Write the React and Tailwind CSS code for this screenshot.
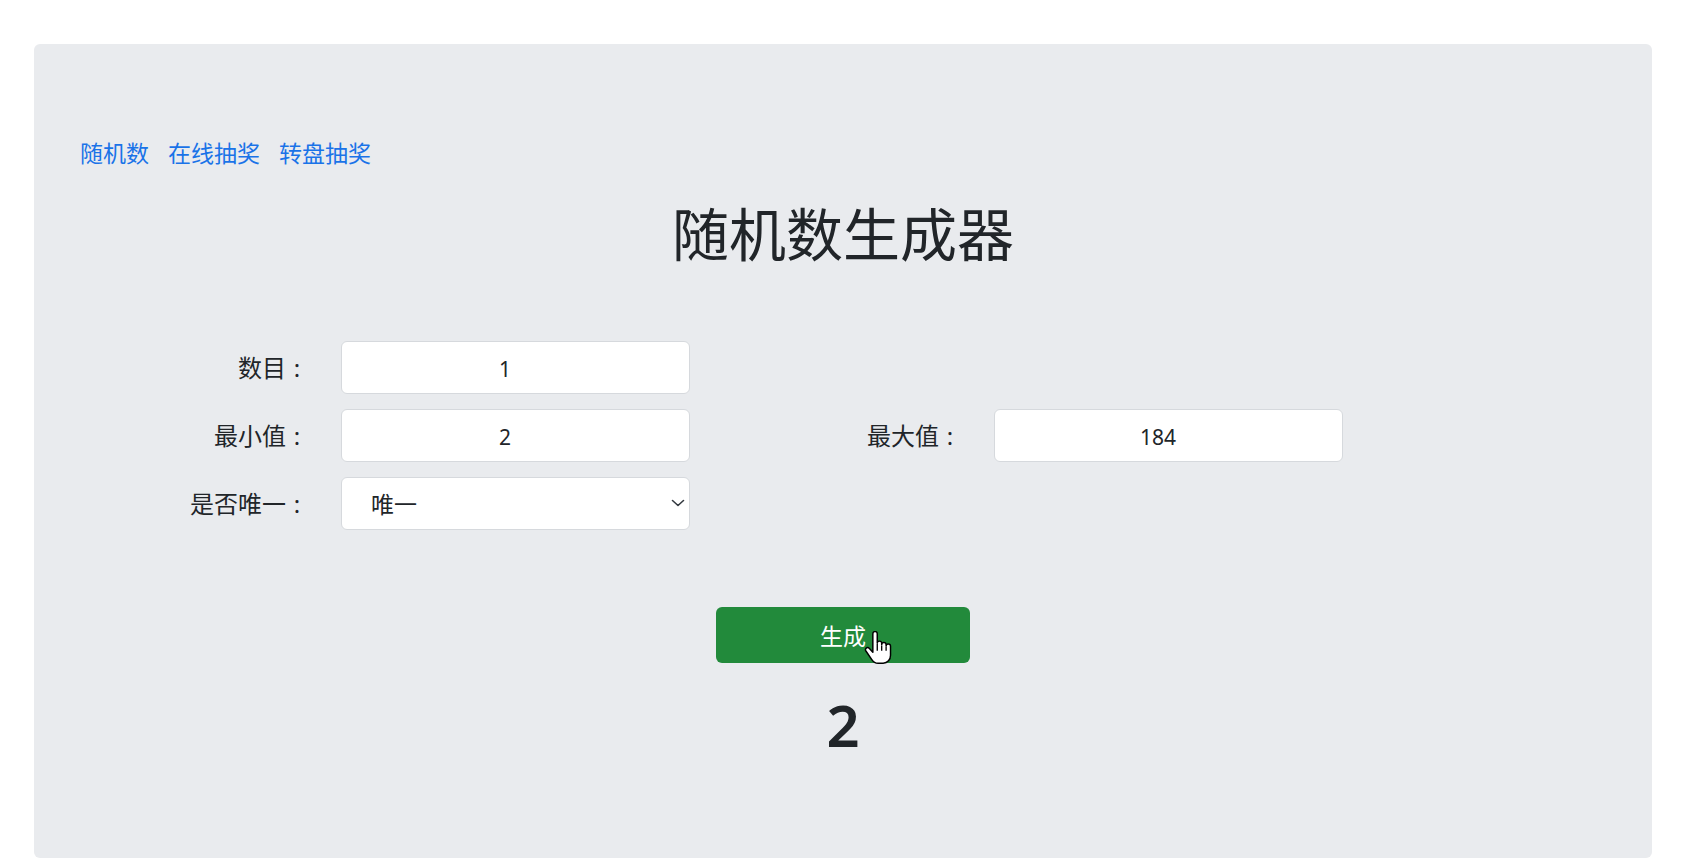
import React from "react";

function Label({ text }) {
  return (
    <div className="flex items-center justify-end text-[24px] text-[#212529]">
      <span>{text}</span>
      <span className="inline-block w-[22px] text-center">:</span>
    </div>
  );
}

function Field({ value }) {
  return (
    <input
      readOnly
      value={value}
      className="h-[53px] w-full rounded-[6px] border border-[#d6d9dd] bg-white pt-[3px] pr-[21px] text-center text-[21px] text-[#212529] outline-none"
    />
  );
}

function HandCursor() {
  return (
    <svg
      className="pointer-events-none absolute left-[148px] top-[24px] h-[35px] w-[28px]"
      viewBox="0 0 19 23"
      fill="none"
    >
      <path
        d="M6 1.5a1.5 1.5 0 0 1 3 0V8a1.5 1.5 0 0 1 3 0v1a1.5 1.5 0 0 1 3 0v1a1.5 1.5 0 0 1 3 0v6c0 3-2 5.5-5 5.5H9.5c-2 0-3.2-1-4.2-2.5L1.3 13.2a1.4 1.4 0 0 1 2.2-1.8L6 14Z"
        fill="white"
        stroke="black"
        strokeWidth="1"
        strokeLinejoin="round"
      />
      <path d="M9 8.5V13M12 9.5V13M15 10.5V13" stroke="black" strokeWidth="0.9" />
    </svg>
  );
}

export default function App() {
  return (
    <div
      className="min-h-[866px] w-full bg-white pt-[44px] pl-[34px]"
      style={{ fontFamily: '"Noto Sans", "Noto Sans CJK SC", sans-serif' }}
    >
      <div className="flex h-[814px] w-[1618px] flex-col rounded-[6px] bg-[#e9ebee]">
        <nav className="flex gap-[19px] pl-[46px] pt-[94px] text-[23px] leading-[30px] text-[#1a73e8]">
          <a href="#">随机数</a>
          <a href="#">在线抽奖</a>
          <a href="#">转盘抽奖</a>
        </nav>
        <h1 className="mt-[33px] text-center text-[57px] leading-[67px] text-[#212529]">
          随机数生成器
        </h1>
        <div className="ml-[100px] mt-[73px] grid grid-cols-[174px_349px_238px_349px] gap-x-[33px] gap-y-[15px]">
          <Label text="数目" />
          <Field value="1" />
          <div />
          <div />
          <Label text="最小值" />
          <Field value="2" />
          <Label text="最大值" />
          <Field value="184" />
          <Label text="是否唯一" />
          <div className="relative">
            <select
              defaultValue="唯一"
              className="h-[53px] w-full appearance-none rounded-[6px] border border-[#d6d9dd] bg-white pl-[29px] pt-[2px] text-[23px] text-[#212529] outline-none"
            >
              <option>唯一</option>
              <option>不唯一</option>
            </select>
            <svg
              className="pointer-events-none absolute right-[5px] top-[22px] h-[8px] w-[14px]"
              viewBox="0 0 14 8"
              fill="none"
            >
              <path d="M1.5 1.5l5.5 5 5.5-5" stroke="#343a40" strokeWidth="1.6" strokeLinecap="round" strokeLinejoin="round" />
            </svg>
          </div>
          <div />
          <div />
        </div>
        <div className="mt-[77px] flex justify-center">
          <button className="relative h-[56px] w-[254px] rounded-[6px] bg-[#228a3b] pt-[3px] text-[23px] text-white">
            生成
            <HandCursor />
          </button>
        </div>
        <div className="mt-[27px] text-center text-[58px] font-semibold leading-[70px] text-[#212529]">
          2
        </div>
      </div>
    </div>
  );
}
